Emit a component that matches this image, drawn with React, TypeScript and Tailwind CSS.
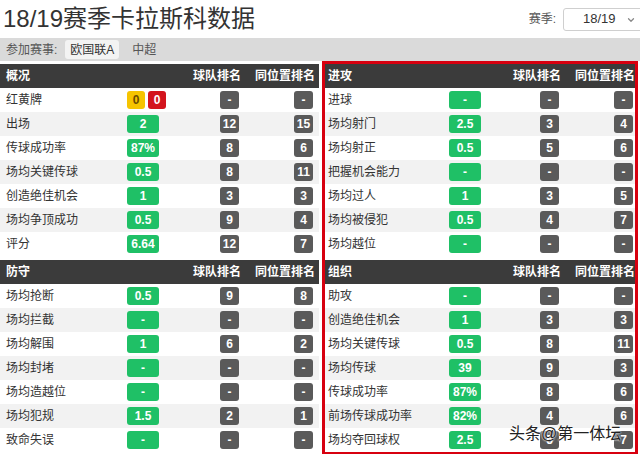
import { ChevronDown } from "lucide-react";

type Row = { label: string; value: string; team: string; pos: string; cards?: boolean };

interface PanelProps {
  title: string;
  rows: Row[];
  rowPad: string;
  headPad: string;
}

const overview: Row[] = [
  { label: "红黄牌", value: "", team: "-", pos: "-", cards: true },
  { label: "出场", value: "2", team: "12", pos: "15" },
  { label: "传球成功率", value: "87%", team: "8", pos: "6" },
  { label: "场均关键传球", value: "0.5", team: "8", pos: "11" },
  { label: "创造绝佳机会", value: "1", team: "3", pos: "3" },
  { label: "场均争顶成功", value: "0.5", team: "9", pos: "4" },
  { label: "评分", value: "6.64", team: "12", pos: "7" },
];

const defence: Row[] = [
  { label: "场均抢断", value: "0.5", team: "9", pos: "8" },
  { label: "场均拦截", value: "-", team: "-", pos: "-" },
  { label: "场均解围", value: "1", team: "6", pos: "2" },
  { label: "场均封堵", value: "-", team: "-", pos: "-" },
  { label: "场均造越位", value: "-", team: "-", pos: "-" },
  { label: "场均犯规", value: "1.5", team: "2", pos: "1" },
  { label: "致命失误", value: "-", team: "-", pos: "-" },
];

const attack: Row[] = [
  { label: "进球", value: "-", team: "-", pos: "-" },
  { label: "场均射门", value: "2.5", team: "3", pos: "4" },
  { label: "场均射正", value: "0.5", team: "5", pos: "6" },
  { label: "把握机会能力", value: "-", team: "-", pos: "-" },
  { label: "场均过人", value: "1", team: "3", pos: "5" },
  { label: "场均被侵犯", value: "0.5", team: "4", pos: "7" },
  { label: "场均越位", value: "-", team: "-", pos: "-" },
];

const organise: Row[] = [
  { label: "助攻", value: "-", team: "-", pos: "-" },
  { label: "创造绝佳机会", value: "1", team: "3", pos: "3" },
  { label: "场均关键传球", value: "0.5", team: "8", pos: "11" },
  { label: "场均传球", value: "39", team: "9", pos: "3" },
  { label: "传球成功率", value: "87%", team: "8", pos: "6" },
  { label: "前场传球成功率", value: "82%", team: "4", pos: "6" },
  { label: "场均夺回球权", value: "2.5", team: "5", pos: "7" },
];

const Rank = ({ text }: { text: string }) => (
  <span className="flex h-[18px] w-[19px] items-center justify-center rounded-[3px] bg-[#5a5a5a] text-[12px] font-bold text-white">
    {text}
  </span>
);

const Panel = ({ title, rows, rowPad, headPad }: PanelProps) => (
  <div>
    <div className={`flex h-[24px] items-center bg-[#3b3b3b] text-[12px] font-bold text-white ${headPad}`}>
      <span className="flex-1">{title}</span>
      <span>球队排名</span>
      <span className="w-[74px] text-right">同位置排名</span>
    </div>
    {rows.map((row, index) => (
      <div
        key={index}
        className={`flex h-[24px] items-center ${rowPad} ${index % 2 === 1 ? "bg-[#f2f2f2]" : "bg-white"}`}
      >
        <span className="w-[121px] text-[12px] text-[#333]">{row.label}</span>
        {row.cards ? (
          <div className="flex gap-[3px]">
            <span className="flex h-[18px] w-[18px] items-center justify-center rounded-[3px] bg-[#f6c400] text-[12px] font-bold text-[#6b4b00]">
              0
            </span>
            <span className="flex h-[18px] w-[18px] items-center justify-center rounded-[3px] bg-[#d3141d] text-[12px] font-bold text-white">
              0
            </span>
          </div>
        ) : (
          <span className="flex h-[18px] w-[32px] items-center justify-center rounded-[3px] bg-[#1fc066] text-[12px] font-bold text-white">
            {row.value}
          </span>
        )}
        <div className="flex flex-1 justify-end">
          <Rank text={row.team} />
        </div>
        <div className="flex w-[74px] justify-end">
          <Rank text={row.pos} />
        </div>
      </div>
    ))}
  </div>
);

export default function App() {
  return (
    <div className="relative h-[454px] w-[640px] overflow-hidden bg-white font-['Liberation_Sans','Noto_Sans_CJK_SC',sans-serif] text-[#333]">
      {/* Title */}
      <div className="flex h-[38px] items-center justify-between pl-[3px]">
        <h1 className="text-[24px] leading-none text-[#333]">18/19赛季卡拉斯科数据</h1>
        <div className="mr-[-4px] flex items-center gap-[7px]">
          <span className="text-[12px] text-[#555]">赛季:</span>
          <div className="relative flex h-[23px] w-[81px] items-center rounded-[3px] border border-[#cfcfcf] bg-white pl-[19px] text-[13px] text-[#333]">
            18/19
            <ChevronDown className="absolute right-[7px] top-[6px] h-[10px] w-[10px] text-[#888]" strokeWidth={3} />
          </div>
        </div>
      </div>

      {/* Competitions */}
      <div className="flex h-[23px] items-center bg-[#dadada] pl-[6px] text-[12px] text-[#555]">
        <span>参加赛事:</span>
        <span className="ml-[8px] flex h-[19px] items-center rounded-[3px] bg-[#f3f3f3] px-[5px] text-[#333]">欧国联A</span>
        <span className="ml-[13px]">中超</span>
      </div>

      {/* Panels */}
      <div className="flex">
        <div className="mt-[3px] flex w-[319px] flex-col gap-[4px]">
          <Panel title="概况" rows={overview} rowPad="pl-[6px] pr-[6px]" headPad="pl-[6px] pr-[4px]" />
          <Panel title="防守" rows={defence} rowPad="pl-[6px] pr-[6px]" headPad="pl-[6px] pr-[4px]" />
        </div>
        <div className="ml-[3px] flex w-[316px] flex-col gap-[4px] border-[3px] border-[#d7000f]">
          <Panel title="进攻" rows={attack} rowPad="pl-[3px] pr-[2px]" headPad="pl-[3px] pr-0" />
          <Panel title="组织" rows={organise} rowPad="pl-[3px] pr-[2px]" headPad="pl-[3px] pr-0" />
        </div>
      </div>

      {/* Watermark */}
      <div className="absolute left-[509px] top-[422px] text-[16px] text-[#222] [text-shadow:0_0_2px_#fff,0_0_2px_#fff]">
        头条@第一体坛
      </div>
    </div>
  );
}
